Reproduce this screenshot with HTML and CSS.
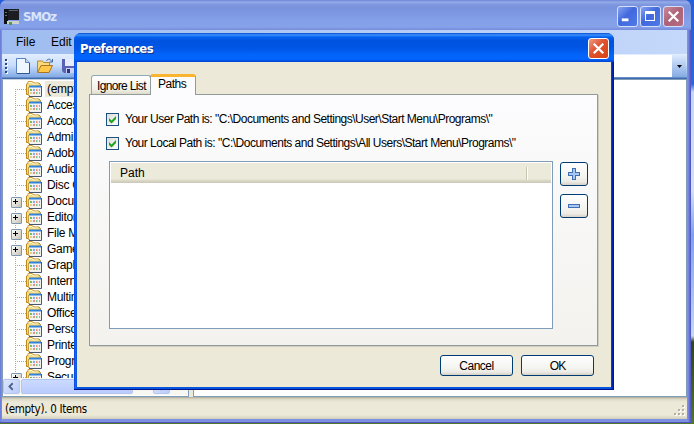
FILE: index.html
```html
<!DOCTYPE html>
<html lang="en">
<head>
<meta charset="utf-8">
<title>SMOz</title>
<link rel="stylesheet" href="styles.css">
</head>
<body>
<svg width="0" height="0" class="defs" aria-hidden="true">
  <defs>
    <linearGradient id="gold" x1="0" y1="0" x2="1" y2="1"><stop offset="0" stop-color="#fff0a0"/><stop offset="1" stop-color="#dfa02a"/></linearGradient>
    <symbol id="folder" viewBox="0 0 16 16">
      <path d="M.5 13.500V3L2 2.500V.7h4.500L7.500 2H13l1.500 1.500v10z" fill="url(#gold)" stroke="#c08a1c"/>
      <path d="M2.500 1.500h3.500l1 1.500h5.500" stroke="#fffbd8" fill="none"/>
      <rect x="3" y="5" width="12" height="10" fill="#f1f2ee"/>
      <path d="M2.500 6v8.500H4" fill="none" stroke="#c9a04a"/>
      <path d="M3 15.500h12.500V5" fill="none" stroke="#4a5870"/>
      <path d="M3 5.500h12" stroke="#2f86dc" stroke-width="2"/>
      <path d="M4 8h2v2H4z" fill="#6cc25c"/><path d="M7 8h2v2H7z" fill="#84acf0"/><path d="M10 8h1.500v2H10zM13 11h1v2h-1z" fill="#f0907c"/>
      <path d="M4 11h2v2H4z" fill="#ecd08c"/><path d="M7 11h2v2H7z" fill="#ec8f86"/><path d="M10 11h1.500v2H10zM13 8h1v2h-1z" fill="#7cc494"/>
    </symbol>
    <symbol id="close" viewBox="0 0 20 20"><path d="M5 5l10 10M15 5L5 15" stroke="#fff" stroke-width="2.400"/></symbol>
    <symbol id="check" viewBox="0 0 13 13"><path d="M3 5v3L5.500 10.500 10 6V3L5.500 7.500z" fill="#21a121"/></symbol>
  </defs>
</svg>
<div class="window">
  <header class="titlebar">
    <svg class="appicon" viewBox="0 0 16 16" shape-rendering="crispEdges"><path d="M0 0h4v15H0z" fill="#101316"/><path d="M1 3h2M1 6h2" stroke="#657181"/><path d="M4 0h11v11H4z" fill="#1b1d20"/><path d="M5 1h9v1H5z" fill="#596270"/><path d="M3 12h12v3H3z" fill="#ccd2c9"/><path d="M5 13h3v3H5z" fill="#4c9d45"/></svg>
    <span class="appname">SMOz</span>
    <div class="controls">
      <i class="ctl"><svg viewBox="0 0 20 20"><path d="M4 12h7v3H4z" fill="#fff"/></svg></i>
      <i class="ctl"><svg viewBox="0 0 20 20" shape-rendering="crispEdges"><path d="M4 4h11v11H4zm1 3v7h9V7z" fill="#fff" fill-rule="evenodd"/></svg></i>
      <i class="ctl ctl-x"><svg><use href="#close"/></svg></i>
    </div>
  </header>
  <nav class="menu"><span class="m1">File</span><span>Edit</span></nav>
  <div class="toolbar">
    <svg class="grip" viewBox="0 0 3 15" shape-rendering="crispEdges"><path d="M1 1h2v2H1zM1 5h2v2H1zM1 9h2v2H1zM1 13h2v2H1z" fill="#fff"/><path d="M0 0h2v2H0zM0 4h2v2H0zM0 8h2v2H0zM0 12h2v2H0z" fill="#27468a"/></svg>
    <svg class="tool" viewBox="0 0 16 16"><path d="M1.500.5h9l4 4v11h-13z" fill="#eff6ff" stroke="#5a83bd"/><path d="M10.500.5v4h4" fill="#c4dcfa" stroke="#5a83bd"/><path d="M14.500 5v10.500H2" stroke="#33578f" fill="none"/></svg>
    <svg class="tool" viewBox="0 0 16 16"><path d="M.5 14V3h5l1 1.500h6V8" fill="#f9db79" stroke="#b5872e"/><path d="M.7 14.500L4 7.500h11.500l-3.500 7z" fill="#ffc84b" stroke="#a97520"/><path d="M9.500 3c1-2.500 4-2.500 5 .5M15.500 1v3h-3" fill="none" stroke="#46679b"/></svg>
    <svg class="tool save" viewBox="0 0 16 16"><path d="M1 1h14v14H3l-2-2z" fill="#5a62b4"/><path d="M4 1h9v7H4z" fill="#e5ebfa"/><path d="M5 10h8v5H5z" fill="#cbd1ef"/><path d="M6 11h3v4H6z" fill="#2c337c"/></svg>
    <div class="address"><span></span><i><svg viewBox="0 0 5 3"><path d="M0 0h5L2.500 3z"/></svg></i></div>
  </div>
  <main class="panes">
    <section class="left">
      <ul class="tree">
        <li class="sel"><b></b><svg><use href="#folder"/></svg><span>(empty)</span></li>
        <li><b></b><svg><use href="#folder"/></svg><span>Accessories</span></li>
        <li><b></b><svg><use href="#folder"/></svg><span>Accounting</span></li>
        <li><b></b><svg><use href="#folder"/></svg><span>Admin</span></li>
        <li><b></b><svg><use href="#folder"/></svg><span>Adobe</span></li>
        <li><b></b><svg><use href="#folder"/></svg><span>Audio</span></li>
        <li><b></b><svg><use href="#folder"/></svg><span>Disc CD</span></li>
        <li class="plus"><b></b><svg><use href="#folder"/></svg><span>Documents</span></li>
        <li class="plus"><b></b><svg><use href="#folder"/></svg><span>Editors</span></li>
        <li class="plus"><b></b><svg><use href="#folder"/></svg><span>File Managers</span></li>
        <li class="plus"><b></b><svg><use href="#folder"/></svg><span>Games</span></li>
        <li><b></b><svg><use href="#folder"/></svg><span>Graphics</span></li>
        <li><b></b><svg><use href="#folder"/></svg><span>Internet</span></li>
        <li><b></b><svg><use href="#folder"/></svg><span>Multimedia</span></li>
        <li><b></b><svg><use href="#folder"/></svg><span>Office</span></li>
        <li><b></b><svg><use href="#folder"/></svg><span>Personal</span></li>
        <li><b></b><svg><use href="#folder"/></svg><span>Printers</span></li>
        <li><b></b><svg><use href="#folder"/></svg><span>Programming</span></li>
        <li class="plus"><b></b><svg><use href="#folder"/></svg><span>Security</span></li>
      </ul>
      <div class="scroll"><i class="sbtn"><svg viewBox="0 0 16 16"><path d="M9.500 4L5.500 8l4 4" fill="none" stroke="#4d6185" stroke-width="2.200"/></svg></i><i class="thumb"></i><i class="sbtn end"><svg viewBox="0 0 16 16"><path d="M6.500 4l4 4-4 4" fill="none" stroke="#4d6185" stroke-width="2.200"/></svg></i></div>
    </section>
    <section class="right"></section>
  </main>
  <footer class="status"><span>(empty). 0 Items</span><svg viewBox="0 0 12 12" shape-rendering="crispEdges"><path d="M9 1h2v2H9zM5 5h2v2H5zM9 5h2v2H9zM1 9h2v2H1zM5 9h2v2H5zM9 9h2v2H9z" fill="#fff"/><path d="M8 0h2v2H8zM4 4h2v2H4zM8 4h2v2H8zM0 8h2v2H0zM4 8h2v2H4zM8 8h2v2H8z" fill="#b5b19f"/></svg></footer>
</div>
<div class="dialog">
  <header class="dtitle"><span>Preferences</span><i class="ctl dx"><svg><use href="#close"/></svg></i></header>
  <div class="dbody">
    <div class="tabs"><div class="tab"><span>Ignore List</span></div><div class="tab active"><span>Paths</span></div></div>
    <div class="page">
      <div class="check"><i><svg><use href="#check"/></svg></i><span class="p1">Your User Path is: "C:\Documents and Settings\User\Start Menu\Programs\"</span></div>
      <div class="check"><i><svg><use href="#check"/></svg></i><span class="p2">Your Local Path is: "C:\Documents and Settings\All Users\Start Menu\Programs\"</span></div>
      <div class="listrow">
        <div class="list"><div class="head"><span>Path</span><i></i></div></div>
        <div class="side">
          <div class="btn small"><svg viewBox="0 0 12 12" shape-rendering="crispEdges"><path d="M4.500.5h3v4h4v3h-4v4h-3v-4h-4v-3h4z" fill="#a9c7ef" stroke="#3f6fb5"/></svg></div>
          <div class="btn small"><svg viewBox="0 0 12 12" shape-rendering="crispEdges"><path d="M.5 4.500h11v3H.5z" fill="#a9c7ef" stroke="#3f6fb5"/></svg></div>
        </div>
      </div>
    </div>
    <div class="actions"><div class="btn"><span class="cn">Cancel</span></div><div class="btn"><span class="ok">OK</span></div></div>
  </div>
</div>
</body>
</html>
```

FILE: styles.css
```css
* { box-sizing: border-box; }
body {
  margin: 0; width: 694px; height: 424px; overflow: hidden; position: relative;
  font: 12px/16px "Liberation Sans", Arial, sans-serif; color: #000;
  background: linear-gradient(#245edb 0, #2a66dd 84px, #c5d6f7 92px, #d5e0f8 190px, #7ba3ec 235px, #c7d7f4 336px, #2f4520 342px, #55762a 424px);
}
svg { display: block; }
.defs { position: absolute; }
.window {
  width: 691px; height: 423px; display: flex; flex-direction: column;
  background: linear-gradient(90deg, #6a7ad8, #7c91e2 2px, #7c91e2 688px, #5d63cc 690px, #4b4fb9);
  border-radius: 7px 7px 0 0; padding: 0 4px 4px 2px;
  border-bottom: 1px solid #4c53ba;
}
.titlebar {
  height: 30px; margin: 0 -4px 0 -2px; flex: none; display: flex; align-items: center; padding: 3px 7px 0 4px;
  border-radius: 7px 7px 0 0;
  background: linear-gradient(#7082d8 0, #93ace8 2px, #7c94dd 5px, #7b94df 10px, #839fe8 20px, #86a2e9 27px, #768bdc 30px);
}
.appicon { width: 16px; height: 16px; }
.appname { font: bold 13px/18px "DejaVu Sans Condensed", "DejaVu Sans", sans-serif; color: #d8e4f8; margin-left: 3px; flex: 1; letter-spacing: -.9px; }
.controls { display: flex; gap: 2px; }
.ctl { width: 21px; height: 21px; border: 1px solid #d6e0fa; border-radius: 3px; background: linear-gradient(135deg, #87a3f2, #4169dd 45%, #5079e8); }
.ctl svg { width: 19px; height: 19px; }
.ctl-x { background: linear-gradient(135deg, #c68c9c, #ac6176 50%, #b76e82); }
.menu { height: 24px; flex: none; background: linear-gradient(90deg, #9fbcf0, #c4d8fa); display: flex; padding: 4px 14px; }
.menu .m1 { width: 35px; }
.toolbar { height: 25px; flex: none; background: linear-gradient(#e2eefe, #c9defb 45%, #86ade6 90%, #416cac 98%); display: flex; align-items: center; padding: 0 1px 1px 3px; }
.grip { width: 3px; height: 15px; }
.tool { width: 16px; height: 16px; margin-left: 5px; }
.grip + .tool { margin-left: 7px; }
.tool + .tool { margin-left: 6px; }
.tool.save { margin-left: 8px; }
.address { flex: 1; margin-left: 8px; height: 22px; display: flex; background: #fff; }
.address span { flex: 1; }
.address i { width: 14px; background: linear-gradient(#dceafd, #84aae3); display: grid; place-items: center; }
.address svg { width: 5px; height: 3px; }
.panes { height: 318px; flex: none; display: flex; gap: 4px; background: #ece9d8; }
.left { width: 187px; border: 1px solid #7f9db9; border-top-color: #c7d3e0; background: #fff; display: flex; flex-direction: column; }
.right { flex: 1; border: 1px solid #7f9db9; background: #fff; }
.tree { list-style: none; margin: 0; padding: 1px 0 0; height: 298px; flex: none; overflow: hidden; }
.tree li { height: 16px; display: flex; align-items: center; }
.tree li b { width: 23px; height: 16px; flex: none; display: block; background: repeating-linear-gradient(90deg, #aaa 0 1px, transparent 1px 2px) 12px 8px / 11px 1px no-repeat, repeating-linear-gradient(#aaa 0 1px, transparent 1px 2px) 12px 0 / 1px 16px no-repeat; }
.tree .sel b { background-position: 12px 8px, 12px 8px; }
.tree svg { width: 16px; height: 16px; flex: none; }
.tree span { margin-left: 3px; padding: 0 2px; white-space: nowrap; letter-spacing: -.3px; }
.tree .sel span { background: #ece9d8; }
.tree .plus b::before {
  content: ""; display: block; width: 9px; height: 9px; margin: 4px 0 0 8px; border: 1px solid #7898b5; border-radius: 1px;
  background: linear-gradient(#000, #000) 1px 3px / 5px 1px no-repeat, linear-gradient(#000, #000) 3px 1px / 1px 5px no-repeat, linear-gradient(135deg, #fff, #c8c2b5);
}
.scroll { height: 17px; display: flex; background: #f7f6f0; padding: 1px 18px 1px 0; gap: 1px; }
.sbtn { width: 17px; border: 1px solid #b5c7f0; border-radius: 2px; background: linear-gradient(135deg, #dbe5ff, #b8cbf9); }
.sbtn svg { width: 15px; height: 13px; }
.thumb { width: 112px; border: 1px solid #b2c4f2; border-radius: 2px; background: linear-gradient(#cbdaff, #bacbfc); }
.end { margin-left: auto; }
.status { height: 22px; flex: none; background: linear-gradient(#aca899, #dcd8c6 2px, #ece9d8 5px, #ece9d8 18px, #d2cfbe); display: flex; justify-content: space-between; align-items: center; padding: 0 1px 0 3px; font: 11.500px/16px "DejaVu Sans Condensed", "DejaVu Sans", sans-serif; }
.status span { letter-spacing: -.3px; margin-top: 2px; }
.status svg { width: 12px; height: 12px; margin-top: 5px; }

.dialog {
  position: absolute; left: 74px; top: 33px; width: 540px; height: 357px;
  background: linear-gradient(90deg, #0831d9, #166aee 1px, #0855dd 3px, #0855dd 537px, #0029b8 538px, #00138c);
  border-radius: 7px 7px 0 0; padding: 0 3px 2px; border-bottom: 1px solid #00138c;
}
.dtitle {
  height: 29px; margin: 0 -3px; display: flex; justify-content: space-between; align-items: center; padding: 2px 5px 0 6px;
  border-radius: 7px 7px 0 0; color: #fff; font: bold 13px/18px "DejaVu Sans Condensed", "DejaVu Sans", sans-serif;
  text-shadow: 1px 1px #0a318c;
  background: linear-gradient(#0a4bd0 0, #3b92ff 2px, #0561ee 4px, #0053df 8px, #0055e5 15px, #0364fb 22px, #0265ff 26px, #0043cf 29px);
}
.dtitle span { letter-spacing: -.55px; margin-top: 1px; }
.dx { border-color: #fff; background: linear-gradient(135deg, #ef9b82, #df5130 45%, #d8420e); }
.dbody { height: 325px; background: #ece9d8; padding: 12px 14px 0 12px; }
.tabs { height: 21px; display: flex; align-items: flex-end; padding-left: 2px; position: relative; }
.tab { width: 60px; height: 19px; margin-bottom: 1px; border: 1px solid #91a7b4; border-bottom: 0; border-radius: 3px 3px 0 0; background: linear-gradient(#fff, #f1f0e8 75%, #dedac9); padding: 2px 0 0 5px; white-space: nowrap; }
.tab span { letter-spacing: -.65px; }
.tab.active span { letter-spacing: -.5px; }
.tab.active { width: 46px; height: 21px; margin: 0 0 0 -1px; border: 1px solid #919b9c; border-top: 3px solid #f9b430; border-bottom: 0; background: #fcfcfe; padding: 0 0 0 7px; line-height: 14px; }
.page { height: 252px; margin-top: -1px; border: 1px solid #919b9c; background: linear-gradient(#fcfcfe, #f3f2ee); padding: 16px 8px 0 16px; box-shadow: 1px 1px #d0cebf; width: 509px; }
.check { height: 16px; display: flex; align-items: center; margin-bottom: 8px; white-space: nowrap; }
.check i { width: 13px; height: 13px; border: 1px solid #1c5180; background: linear-gradient(135deg, #dcdcd7, #fff); margin-right: 6px; }
.check svg { width: 13px; height: 13px; margin: -1px; }
.p1 { letter-spacing: -.505px; }
.p2 { letter-spacing: -.5px; }
.listrow { display: flex; gap: 7px; margin: 2px 0 0 3px; padding-top: 2px; }
.check + .listrow { margin-top: 0; padding-top: 2px; position: static; }
.list { width: 444px; height: 168px; border: 1px solid #7f9db9; background: #fff; padding: 1px; }
.head { height: 20px; background: linear-gradient(#ebeadb 16px, #dedccb 17px, #cbc7b8 20px); display: flex; justify-content: space-between; align-items: center; padding: 0 23px 0 9px; }
.head i { width: 2px; height: 13px; background: #c7c5b2; border-right: 1px solid #fff; }
.side { display: flex; flex-direction: column; gap: 8px; padding-top: 1px; }
.btn { width: 73px; height: 21px; border: 1px solid #003c74; border-radius: 3px; background: linear-gradient(#fff, #f3f3ef 65%, #ecebe5 85%, #d6d0c5); display: grid; place-items: center; }
.small { width: 28px; height: 24px; }
.small svg { width: 12px; height: 12px; }
.cn { letter-spacing: -.5px; }
.ok { letter-spacing: -.8px; }
.actions { display: flex; justify-content: flex-end; gap: 8px; margin: 9px 3px 0 0; }
```
